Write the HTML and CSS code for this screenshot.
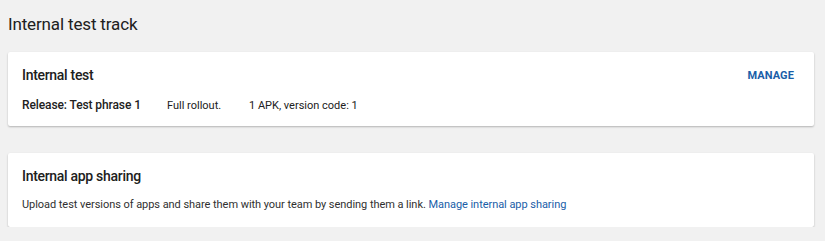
FILE: index.html
```html
<!DOCTYPE html>
<html>
<head>
<meta charset="utf-8">
<link rel="stylesheet" href="styles.css">
</head>
<body>
<h1 class="page-title">Internal test track</h1>
<section class="card">
  <div class="card-head">
    <h2 class="card-title">Internal test</h2>
    <a class="manage-btn" href="#">MANAGE</a>
  </div>
  <div class="release-row">
    <span class="release-name">Release: Test phrase 1</span>
    <span class="rollout">Full rollout.</span>
    <span class="apk">1 APK, version code: 1</span>
  </div>
</section>
<section class="card card-sharing">
  <h2 class="card-title">Internal app sharing</h2>
  <p class="card-text">Upload test versions of apps and share them with your team by sending them a link. <a class="text-link" href="#">Manage internal app sharing</a></p>
</section>
</body>
</html>
```
FILE: styles.css
```css
html, body {
  margin: 0;
  padding: 0;
  background: #f1f1f1;
}
body {
  padding: 0 11px 0 8px;
  font-family: Roboto, "Noto Sans", sans-serif;
  color: #212121;
}
.page-title {
  margin: 0;
  padding-top: 12px;
  font-size: 17px;
  font-weight: 400;
  line-height: 24px;
  letter-spacing: -0.15px;
  color: #202020;
}
.card {
  background: #fff;
  margin-top: 16px;
  padding: 14px 20px 14px 14px;
  height: 74px;
  box-sizing: border-box;
  box-shadow: 0 1px 2px rgba(0,0,0,0.25);
  border-radius: 2px;
}
.card-head {
  display: flex;
  justify-content: space-between;
  align-items: center;
}
.card-title {
  margin: 0;
  font-size: 14px;
  font-weight: 500;
  line-height: 18px;
  letter-spacing: -0.3px;
  color: #202020;
}
.manage-btn {
  font-size: 11px;
  font-weight: 700;
  color: #1a5ea8;
  text-decoration: none;
  letter-spacing: 0.1px;
}
.release-row {
  display: flex;
  align-items: baseline;
  margin-top: 13px;
  font-size: 11px;
  line-height: 16px;
}
.release-name {
  font-size: 12px;
  font-weight: 500;
  letter-spacing: -0.1px;
  width: 145px;
}
.rollout {
  width: 82px;
}
.card-sharing {
  margin-top: 27px;
}
.card-text {
  margin: 12px 0 0;
  font-size: 11px;
  line-height: 16px;
  letter-spacing: -0.05px;
  color: #303030;
}
.text-link {
  color: #1a5ea8;
  text-decoration: none;
}
```
